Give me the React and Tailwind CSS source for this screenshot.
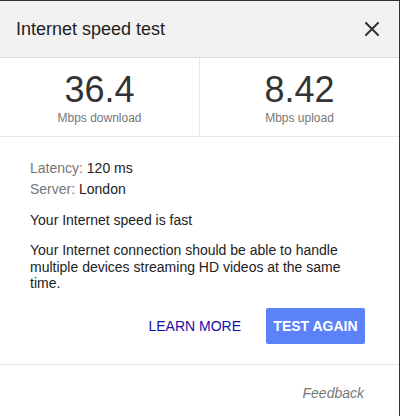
import React from "react";

export default function App() {
  return (
    <div className="w-[400px] h-[416px] bg-white border-t border-r border-[#333333] font-['Liberation_Sans',Arial,sans-serif] overflow-hidden">
      <div className="h-[57px] bg-[#f2f2f2] border-b border-[#dadada] flex items-center justify-between pl-4 pr-[20px]">
        <span className="text-[18px] text-[#222222] leading-[22px]">Internet speed test</span>
        <svg width="14" height="14" viewBox="0 0 14 14" className="block">
          <path d="M1 1 L13 13 M13 1 L1 13" stroke="#333333" strokeWidth="2" strokeLinecap="square" />
        </svg>
      </div>
      <div className="flex h-[79px] border-b border-[#e8e8e8]">
        <div className="w-[200px] border-r border-[#e8e8e8] flex flex-col items-center pt-[14px]">
          <span className="text-[36px] leading-[36px] text-[#333333]">36.4</span>
          <span className="text-[12px] leading-[14px] text-[#777777] mt-[3px]">Mbps download</span>
        </div>
        <div className="flex-1 flex flex-col items-center pt-[14px]">
          <span className="text-[36px] leading-[36px] text-[#333333]">8.42</span>
          <span className="text-[12px] leading-[14px] text-[#777777] mt-[3px]">Mbps upload</span>
        </div>
      </div>
      <div className="px-[30px] pt-[21px] text-[14px] text-[#222222]">
        <div className="leading-[21px]">
          <span className="text-[#777777]">Latency:</span> 120 ms
        </div>
        <div className="leading-[21px]">
          <span className="text-[#777777]">Server:</span> London
        </div>
        <p className="mt-[12px] leading-[17px]">Your Internet speed is fast</p>
        <p className="mt-[13px] leading-[16.5px]">
          Your Internet connection should be able to handle multiple devices streaming HD videos at the same time.
        </p>
      </div>
      <div className="flex items-center justify-end pr-[34px] mt-[16px] gap-[25px]">
        <span className="text-[14px] text-[#1a0dab] leading-[16px]">LEARN MORE</span>
        <div className="w-[99px] h-[36px] rounded-[2px] bg-[#5b82f9] flex items-center justify-center">
          <span className="text-[14px] font-bold text-white leading-[16px]">TEST AGAIN</span>
        </div>
      </div>
      <div className="mt-[20px] border-t border-[#e6e6e6] flex justify-end pr-[35px] pt-[20px]">
        <span className="text-[14px] italic text-[#777777] leading-[16px]">Feedback</span>
      </div>
    </div>
  );
}
